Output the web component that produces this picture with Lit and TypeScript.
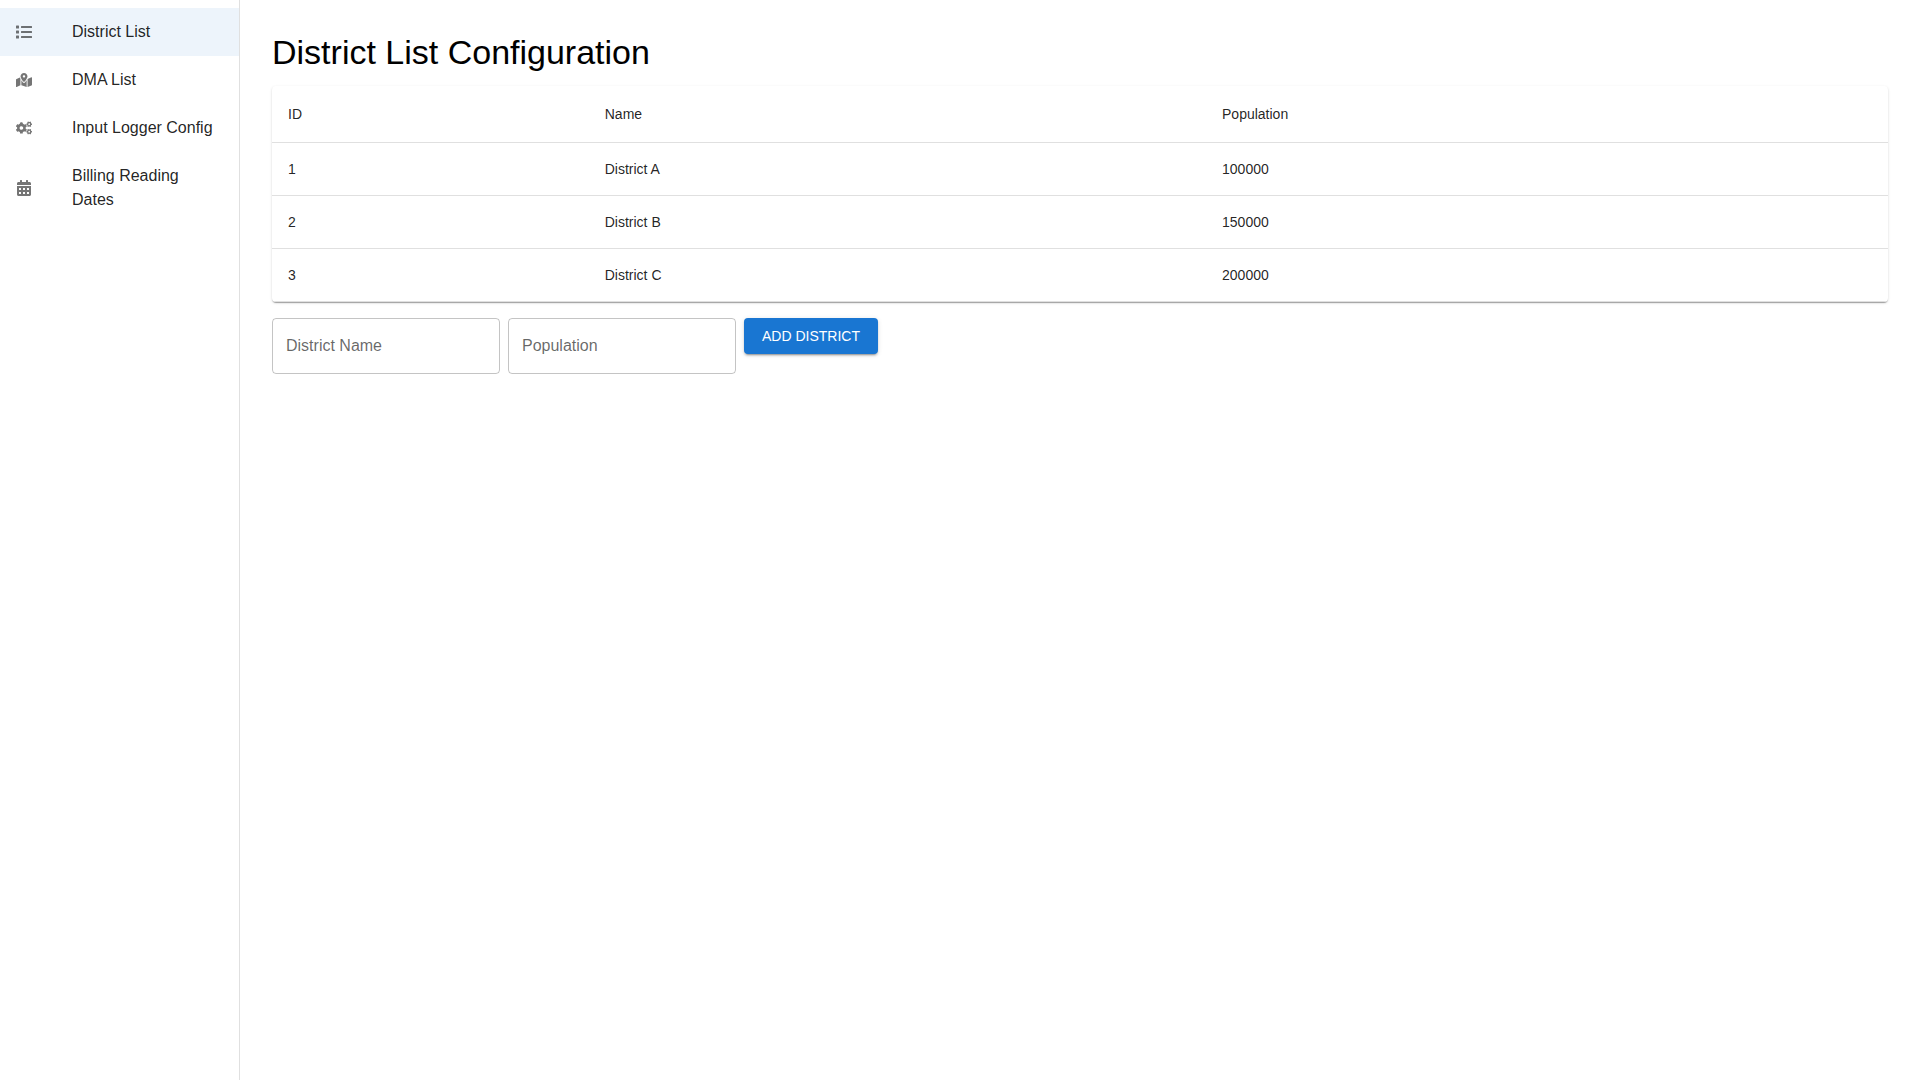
import { LitElement, html, css, svg } from "lit";
import { customElement, state } from "lit/decorators.js";
import { classMap } from "lit/directives/class-map.js";

interface District {
  id: number;
  name: string;
  population: number;
}

interface NavItem {
  label: string;
  href: string;
  viewBox: string;
  path: string;
}

// One small gear of the cogs icon, drawn at the top right and the bottom right.
const smallGear =
  "l8.2-14.3c3-5.3 9.4-7.5 15.1-5.4 11.8 4.4 22.6 10.7 32.1 18.6 4.6 3.8 5.8 10.5 2.8 15.7l-8.2 14.3c6.9 8 12.3 17.3 15.9 27.4h16.5c6 0 11.2 4.3 12.2 10.3 2 12 2.1 24.6 0 37.1-1 6-6.2 10.4-12.2 10.4h-16.5c-3.6 10.1-9 19.4-15.9 27.4l8.2 14.3c3 5.2 1.9 11.9-2.8 15.7-9.5 7.9-20.4 14.2-32.1 18.6-5.7 2.1-12.1-.1-15.1-5.4l-8.2-14.3c-10.4 1.9-21.2 1.9-31.7 0l-8.2 14.3c-3 5.3-9.4 7.5-15.1 5.4-11.8-4.4-22.6-10.7-32.1-18.6-4.6-3.8-5.8-10.5-2.8-15.7l8.2-14.3c-6.9-8-12.3-17.3-15.9-27.4h-16.5c-6 0-11.2-4.3-12.2-10.3-2-12-2.1-24.6 0-37.1 1-6 6.2-10.4 12.2-10.4h16.5c3.6-10.1 9-19.4 15.9-27.4l-8.2-14.3c-3-5.2-1.9-11.9 2.8-15.7 9.5-7.9 20.4-14.2 32.1-18.6 5.7-2.1 12.1.1 15.1 5.4l8.2 14.3c10.5-1.9 21.2-1.9 31.7 0z";

const largeGear =
  "M386.3 286.1l33.7 16.8c10.1 5.8 14.5 18.1 10.5 29.1-8.9 24.2-26.4 46.4-42.6 65.8-7.4 8.9-20.2 11.1-30.3 5.3l-29.1-16.8c-16 13.7-34.6 24.6-54.9 31.7v33.6c0 11.6-8.3 21.6-19.7 23.6-24.6 4.2-50.4 4.4-75.9 0-11.5-2-20-11.9-20-23.6V418c-20.3-7.2-38.9-18-54.9-31.7L74 403c-10 5.8-22.9 3.6-30.3-5.3-16.2-19.4-33.3-41.6-42.2-65.7-4-10.9.4-23.2 10.5-29.1l33.3-16.8c-3.9-20.9-3.9-42.4 0-63.4L12 205.8c-10.1-5.8-14.6-18.1-10.5-29 8.9-24.2 26-46.4 42.2-65.8 7.4-8.9 20.2-11.1 30.3-5.3l29.1 16.8c16-13.7 34.6-24.6 54.9-31.7V57.1c0-11.5 8.2-21.5 19.6-23.5 24.6-4.2 50.5-4.4 76-.1 11.5 2 20 11.9 20 23.6v33.6c20.3 7.2 38.9 18 54.9 31.7l29.1-16.8c10-5.8 22.9-3.6 30.3 5.3 16.2 19.4 33.2 41.6 42.1 65.8 4 10.9.1 23.2-10 29.1l-33.7 16.8c3.9 21 3.9 42.5 0 63.5zm-117.6 21.1c59.2-77-28.7-164.9-105.7-105.7-59.2 77 28.7 164.9 105.7 105.7z";

// Square openings of the calendar grid.
const dayCell = (x: number, y: number) =>
  `M${x} ${y + 12}v40c0 6.6 5.4 12 12 12h40c6.6 0 12-5.4 12-12v-40c0-6.6-5.4-12-12-12h-40c-6.6 0-12 5.4-12 12z`;

const navItems: NavItem[] = [
  {
    label: "District List",
    href: "#district-list",
    viewBox: "0 0 512 512",
    path: "M80 368H16a16 16 0 0 0-16 16v64a16 16 0 0 0 16 16h64a16 16 0 0 0 16-16v-64a16 16 0 0 0-16-16zm0-320H16A16 16 0 0 0 0 64v64a16 16 0 0 0 16 16h64a16 16 0 0 0 16-16V64a16 16 0 0 0-16-16zm0 160H16a16 16 0 0 0-16 16v64a16 16 0 0 0 16 16h64a16 16 0 0 0 16-16v-64a16 16 0 0 0-16-16zm416 176H176a16 16 0 0 0-16 16v32a16 16 0 0 0 16 16h320a16 16 0 0 0 16-16v-32a16 16 0 0 0-16-16zm0-320H176a16 16 0 0 0-16 16v32a16 16 0 0 0 16 16h320a16 16 0 0 0 16-16V80a16 16 0 0 0-16-16zm0 160H176a16 16 0 0 0-16 16v32a16 16 0 0 0 16 16h320a16 16 0 0 0 16-16v-32a16 16 0 0 0-16-16z",
  },
  {
    label: "DMA List",
    href: "#dma-list",
    viewBox: "0 0 576 512",
    path: "M288 0c-69.59 0-126 56.41-126 126 0 56.26 82.35 158.8 113.9 196.02 6.39 7.54 17.82 7.54 24.2 0C331.65 284.8 414 182.26 414 126 414 56.41 357.59 0 288 0zm0 168c-23.2 0-42-18.8-42-42s18.8-42 42-42 42 18.8 42 42-18.8 42-42 42zM20.12 215.95A32.006 32.006 0 0 0 0 245.66v250.32c0 11.32 11.43 19.06 21.94 14.86L160 448V214.92c-8.84-15.98-16.07-31.54-21.25-46.42L20.12 215.95zM288 359.67c-14.07 0-27.38-6.18-36.51-16.96-19.66-23.2-40.57-49.62-59.49-76.72v182l192 64V266c-18.92 27.09-39.82 53.52-59.49 76.72-9.13 10.77-22.44 16.95-36.51 16.95zm266.06-198.51L416 224v288l139.88-55.95A31.996 31.996 0 0 0 576 426.34V176.02c0-11.32-11.43-19.06-21.94-14.86z",
  },
  {
    label: "Input Logger Config",
    href: "#input-logger-config",
    viewBox: "0 0 640 512",
    path: `M543.8 20.6${smallGear}M501.6 132.2c38.5 29.6 82.4-14.3 52.8-52.8-38.5-29.7-82.4 14.3-52.8 52.8z${largeGear}M543.8 319.5${smallGear}M501.6 431c38.5 29.6 82.4-14.3 52.8-52.8-38.5-29.6-82.4 14.3-52.8 52.8z`,
  },
  {
    label: "Billing Reading Dates",
    href: "#billing-reading-dates",
    viewBox: "0 0 448 512",
    path: `M0 464c0 26.5 21.5 48 48 48h352c26.5 0 48-21.5 48-48V192H0v272z${[64, 192, 320]
      .map((x) => dayCell(x, 256) + dayCell(x, 384))
      .join("")}M400 64h-48V16c0-8.8-7.2-16-16-16h-32c-8.8 0-16 7.2-16 16v48H160V16c0-8.8-7.2-16-16-16h-32c-8.8 0-16 7.2-16 16v48H48C21.5 64 0 85.5 0 112v48h448v-48c0-26.5-21.5-48-48-48z`,
  },
];

@customElement("app-root")
export class AppRoot extends LitElement {
  @state() private current = "#district-list";
  @state() private name = "";
  @state() private population = "";
  @state() private districts: District[] = [
    { id: 1, name: "District A", population: 100000 },
    { id: 2, name: "District B", population: 150000 },
    { id: 3, name: "District C", population: 200000 },
  ];

  static styles = css`
    :host {
      display: flex;
      min-height: 100vh;
      background: #fff;
      color: rgba(0, 0, 0, 0.87);
      font-family: "Liberation Sans", Arial, sans-serif;
      font-size: 16px;
      line-height: 24px;
    }
    * {
      box-sizing: border-box;
    }
    .drawer {
      flex: 0 0 240px;
      padding: 8px 0;
      border-right: 1px solid rgba(0, 0, 0, 0.12);
    }
    .menu {
      margin: 0;
      padding: 0;
      list-style: none;
    }
    .item {
      display: flex;
      align-items: center;
      padding: 12px 16px;
      color: inherit;
      text-decoration: none;
    }
    .item:hover {
      background: rgba(0, 0, 0, 0.04);
    }
    .item.selected {
      background: rgba(25, 118, 210, 0.08);
    }
    .item-icon {
      display: flex;
      flex: 0 0 56px;
      color: rgba(0, 0, 0, 0.54);
    }
    .icon {
      width: 16px;
      height: 16px;
      fill: currentColor;
    }
    .content {
      flex: 1;
      min-width: 0;
      padding: 32px;
    }
    .title {
      margin: 0 0 14px;
      color: #000;
      font-size: 34px;
      font-weight: 400;
      line-height: 40px;
    }
    .paper {
      overflow-x: auto;
      border-radius: 4px;
      background: #fff;
      box-shadow:
        0 2px 1px -1px rgba(0, 0, 0, 0.2),
        0 1px 1px 0 rgba(0, 0, 0, 0.14),
        0 1px 3px 0 rgba(0, 0, 0, 0.12);
    }
    .table {
      width: 100%;
      border-collapse: separate;
      border-spacing: 0;
      font-size: 14px;
    }
    .col-id {
      width: 19.6%;
    }
    .col-name {
      width: 38.2%;
    }
    .head,
    .cell {
      padding: 16px;
      border-bottom: 1px solid #e0e0e0;
      text-align: left;
      font-weight: 400;
    }
    .head {
      line-height: 24px;
    }
    .cell {
      line-height: 20px;
    }
    .form {
      display: flex;
      flex-wrap: wrap;
      align-items: flex-start;
      gap: 8px;
      margin-top: 16px;
    }
    .field {
      display: grid;
      width: 228px;
    }
    .label,
    .input {
      grid-area: 1 / 1;
    }
    .label {
      align-self: center;
      padding: 0 14px;
      color: rgba(0, 0, 0, 0.6);
      pointer-events: none;
    }
    .label.filled,
    .field:focus-within .label {
      align-self: start;
      font-size: 12px;
      line-height: 18px;
    }
    .input {
      width: 100%;
      height: 56px;
      padding: 16px 13px;
      border: 1px solid rgba(0, 0, 0, 0.23);
      border-radius: 4px;
      outline: none;
      background: transparent;
      color: inherit;
      font: inherit;
    }
    .input:focus {
      border-color: #1976d2;
    }
    .add {
      padding: 6px 18px;
      border: 0;
      border-radius: 4px;
      background: #1976d2;
      box-shadow:
        0 3px 1px -2px rgba(0, 0, 0, 0.2),
        0 2px 2px 0 rgba(0, 0, 0, 0.14),
        0 1px 5px 0 rgba(0, 0, 0, 0.12);
      color: #fff;
      font: inherit;
      font-size: 14px;
      line-height: 24px;
      text-transform: uppercase;
      cursor: pointer;
    }
    .add:hover {
      background: #1565c0;
    }
  `;

  private addDistrict(event: Event) {
    event.preventDefault();
    if (!this.name || !this.population) return;
    this.districts = [
      ...this.districts,
      { id: this.districts.length + 1, name: this.name, population: Number(this.population) },
    ];
    this.name = "";
    this.population = "";
  }

  private renderItem(item: NavItem) {
    const selected = item.href === this.current;
    return html`
      <li>
        <a
          class=${classMap({ item: true, selected })}
          href=${item.href}
          aria-current=${selected ? "page" : "false"}
          @click=${() => (this.current = item.href)}
        >
          <span class="item-icon">
            <svg class="icon" viewBox=${item.viewBox} aria-hidden="true">
              ${svg`<path fill-rule="evenodd" d=${item.path}></path>`}
            </svg>
          </span>
          <span>${item.label}</span>
        </a>
      </li>
    `;
  }

  render() {
    return html`
      <nav class="drawer">
        <ul class="menu">
          ${navItems.map((item) => this.renderItem(item))}
        </ul>
      </nav>
      <main class="content">
        <h1 class="title">District List Configuration</h1>
        <div class="paper">
          <table class="table">
            <colgroup>
              <col class="col-id" />
              <col class="col-name" />
              <col />
            </colgroup>
            <thead>
              <tr>
                <th class="head" scope="col">ID</th>
                <th class="head" scope="col">Name</th>
                <th class="head" scope="col">Population</th>
              </tr>
            </thead>
            <tbody>
              ${this.districts.map(
                (d) => html`
                  <tr>
                    <td class="cell">${d.id}</td>
                    <td class="cell">${d.name}</td>
                    <td class="cell">${d.population}</td>
                  </tr>
                `,
              )}
            </tbody>
          </table>
        </div>
        <form class="form" @submit=${this.addDistrict}>
          <div class="field">
            <label class=${classMap({ label: true, filled: !!this.name })} for="name">District Name</label>
            <input
              class="input"
              id="name"
              type="text"
              .value=${this.name}
              @input=${(e: Event) => (this.name = (e.target as HTMLInputElement).value)}
            />
          </div>
          <div class="field">
            <label class=${classMap({ label: true, filled: !!this.population })} for="population">Population</label>
            <input
              class="input"
              id="population"
              type="text"
              inputmode="numeric"
              .value=${this.population}
              @input=${(e: Event) => (this.population = (e.target as HTMLInputElement).value)}
            />
          </div>
          <button class="add" type="submit">Add District</button>
        </form>
      </main>
    `;
  }
}
